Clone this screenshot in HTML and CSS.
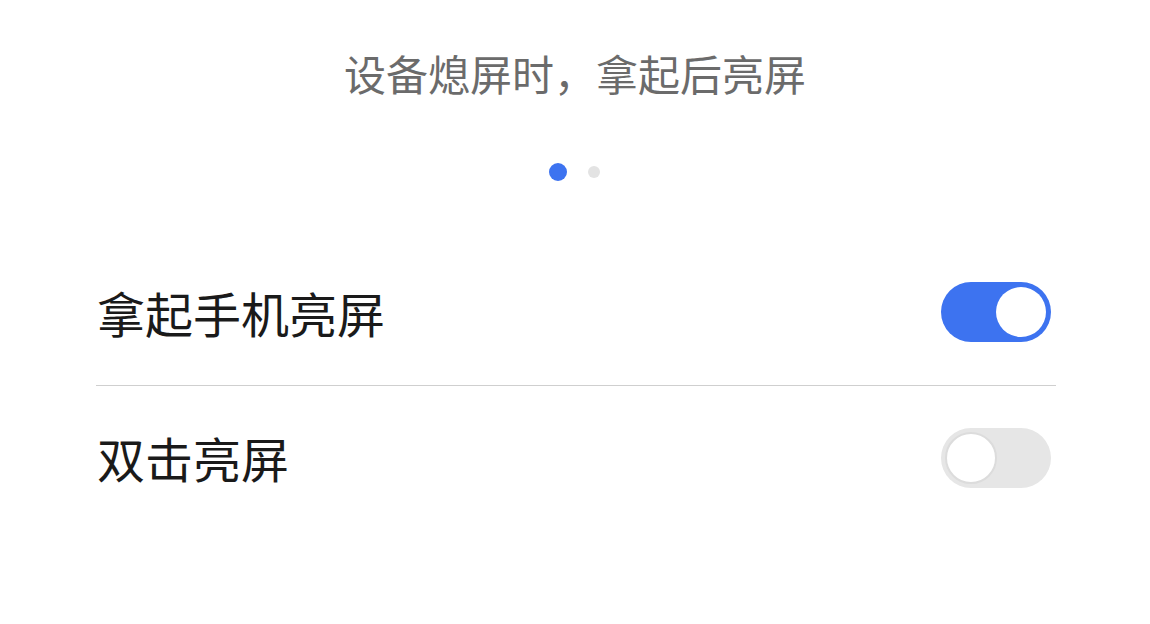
FILE: index.html
```html
<!DOCTYPE html>
<html lang="zh-CN">
<head>
<meta charset="utf-8">
<title>亮屏设置</title>
<link rel="stylesheet" href="styles.css">
</head>
<body>
<main class="page">
  <p class="hint">设备熄屏时，拿起后亮屏</p>
  <div class="dots">
    <span class="dot dot-active"></span>
    <span class="dot"></span>
  </div>
  <ul class="settings">
    <li class="row">
      <span class="label">拿起手机亮屏</span>
      <span class="switch switch-on"><span class="knob"></span></span>
    </li>
    <li class="row">
      <span class="label">双击亮屏</span>
      <span class="switch"><span class="knob"></span></span>
    </li>
  </ul>
</main>
</body>
</html>
```
FILE: styles.css
```css
html, body {
  margin: 0;
  padding: 0;
  background: #ffffff;
}

body {
  font-family: "Noto Sans CJK SC", "Noto Sans", sans-serif;
  width: 1150px;
  height: 624px;
  overflow: hidden;
}

.page {
  display: flex;
  flex-direction: column;
  align-items: center;
  padding-top: 45px;
}

.hint {
  margin: 0;
  font-size: 42px;
  line-height: 56px;
  height: 56px;
  color: #6b6b6b;
  text-align: center;
}

.dots {
  display: flex;
  align-items: center;
  gap: 21px;
  height: 18px;
  margin-top: 62px;
  margin-right: 1px;
}

.dot {
  display: block;
  width: 12px;
  height: 12px;
  border-radius: 50%;
  background: #e3e3e3;
}

.dot-active {
  width: 18px;
  height: 18px;
  background: #3d73f0;
}

.settings {
  list-style: none;
  margin: 60px 0 0 2px;
  padding: 0;
  width: 960px;
}

.row {
  display: flex;
  align-items: center;
  justify-content: space-between;
  height: 144px;
  padding-right: 5px;
}

.row + .row {
  border-top: 1px solid #cfcfcf;
}

.label {
  font-size: 48px;
  color: #1a1a1a;
  line-height: 1;
  margin-left: 1px;
  margin-top: -3px;
}

.switch {
  position: relative;
  display: block;
  width: 110px;
  height: 60px;
  border-radius: 30px;
  background: #e6e6e6;
  box-sizing: border-box;
}

.switch .knob {
  position: absolute;
  top: 4px;
  left: 4px;
  width: 52px;
  height: 52px;
  border-radius: 50%;
  background: #ffffff;
  border: 2px solid #dcdcdc;
  box-sizing: border-box;
}

.switch-on {
  background: #3d73f0;
  margin-top: -2px;
}

.switch-on .knob {
  left: auto;
  right: 5px;
  top: 5px;
  width: 50px;
  height: 50px;
  border: none;
}
```
